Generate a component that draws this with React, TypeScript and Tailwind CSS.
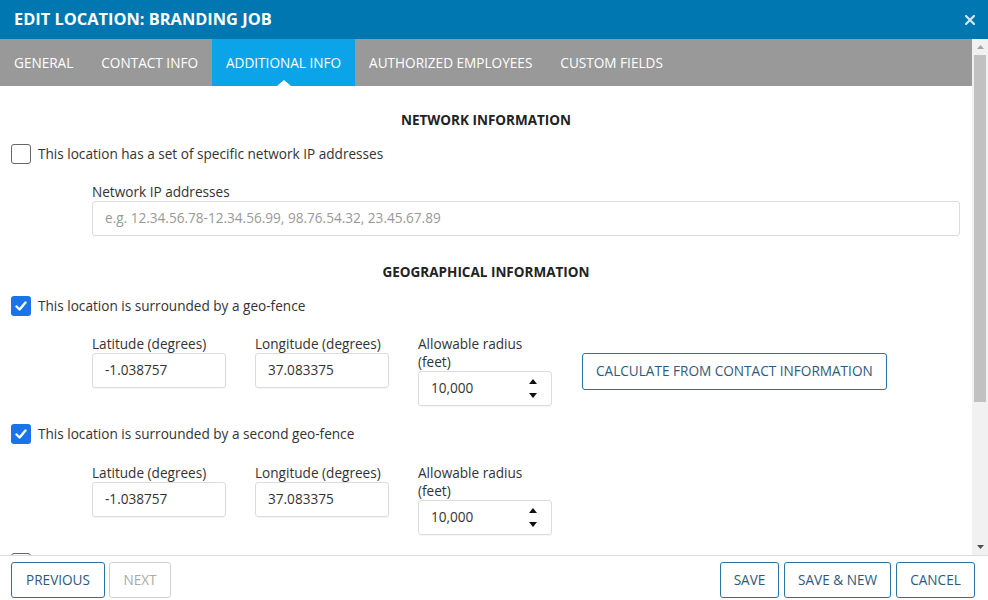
import React from "react";

const font = { fontFamily: '"Open Sans", "Noto Sans", Arial, sans-serif' };

function Checkbox({ checked }: { checked?: boolean }) {
  if (checked) {
    return (
      <div className="w-[20px] h-[20px] rounded-[3px] bg-[#1a73e8] flex items-center justify-center shrink-0">
        <svg width="14" height="14" viewBox="0 0 14 14">
          <path d="M2.5 7.5 L5.6 10.5 L11.5 3.5" stroke="white" strokeWidth="2.4" fill="none" strokeLinecap="round" strokeLinejoin="round" />
        </svg>
      </div>
    );
  }
  return <div className="w-[20px] h-[20px] rounded-[3px] border-[1.5px] border-[#666] bg-white shrink-0" />;
}

function Field({ label, value, spin }: { label: React.ReactNode; value: string; spin?: boolean }) {
  return (
    <div className="w-[134px] flex flex-col">
      <div className="text-[13.6px] leading-[18px] text-[#333]">{label}</div>
      <div className="h-[35px] border border-[#dcdcdc] rounded-[3px] shadow-[0_1px_1px_rgba(0,0,0,0.04)] flex items-center pl-[12px] pr-[14px] text-[13.6px] text-[#333] justify-between">
        <span>{value}</span>
        {spin && (
          <div className="flex flex-col gap-[9px] items-center">
            <svg width="8" height="5" viewBox="0 0 8 5"><path d="M0 5 L4 0 L8 5 Z" fill="#111" /></svg>
            <svg width="8" height="5" viewBox="0 0 8 5"><path d="M0 0 L8 0 L4 5 Z" fill="#111" /></svg>
          </div>
        )}
      </div>
    </div>
  );
}

function GeoRow({ withButton }: { withButton?: boolean }) {
  return (
    <div className="flex items-start pl-[92px] gap-[29px]">
      <Field label="Latitude (degrees)" value="-1.038757" />
      <Field label="Longitude (degrees)" value="37.083375" />
      <Field label={<>Allowable radius<br />(feet)</>} value="10,000" spin />
      {withButton && (
        <button className="ml-[1px] mt-[18px] h-[37px] px-[13px] border border-[#2a72a3] rounded-[3px] text-[13.6px] text-[#2d5a7a] bg-white">
          CALCULATE FROM CONTACT INFORMATION
        </button>
      )}
    </div>
  );
}

function CheckRow({ checked, label }: { checked?: boolean; label: string }) {
  return (
    <div className="flex items-center gap-[7px] pl-[11px] h-[20px]">
      <Checkbox checked={checked} />
      <span className="text-[13.6px] text-[#333] leading-[20px]">{label}</span>
    </div>
  );
}

function FooterBtn({ children, disabled, w }: { children: React.ReactNode; disabled?: boolean; w: string }) {
  return (
    <button
      className={
        "h-[36px] pt-[1px] rounded-[3px] border text-[13.6px] bg-white flex items-center justify-center " +
        w + " " +
        (disabled ? "border-[#cfcfcf] text-[#aaa]" : "border-[#2a72a3] text-[#2d5a7a]")
      }
    >
      {children}
    </button>
  );
}

export default function App() {
  const tabs = ["GENERAL", "CONTACT INFO", "ADDITIONAL INFO", "AUTHORIZED EMPLOYEES", "CUSTOM FIELDS"];
  return (
    <div style={font} className="w-[988px] h-[600px] flex flex-col bg-white overflow-hidden">
      <div className="h-[39px] bg-[#0077b0] flex items-center justify-between pl-[14px] pr-[13px] shrink-0">
        <span className="text-white font-bold text-[16.4px]">EDIT LOCATION: BRANDING JOB</span>
        <svg width="10" height="10" viewBox="0 0 10 10">
          <path d="M1 1 L9 9 M9 1 L1 9" stroke="#d6e6f0" strokeWidth="2.2" strokeLinecap="square" />
        </svg>
      </div>
      <div className="flex flex-1 min-h-0">
        <div className="flex-1 flex flex-col min-w-0 overflow-hidden">
          <div className="h-[47px] bg-[#999999] flex shrink-0">
            {tabs.map((t) => {
              const active = t === "ADDITIONAL INFO";
              return (
                <div
                  key={t}
                  className={
                    "relative h-full flex items-center pt-[2px] px-[14px] text-[13.6px] text-white " +
                    (active ? "bg-[#0ba4e8]" : "")
                  }
                >
                  {t}
                  {active && (
                    <div className="absolute bottom-0 left-1/2 -translate-x-1/2 w-0 h-0 border-l-[7px] border-r-[7px] border-b-[6px] border-l-transparent border-r-transparent border-b-white" />
                  )}
                </div>
              );
            })}
          </div>
          <div className="flex-1 flex flex-col">
            <div className="mt-[24px] h-[20px] text-center font-bold text-[13.5px] text-[#222] leading-[20px]">NETWORK INFORMATION</div>
            <div className="mt-[14px]"><CheckRow label="This location has a set of specific network IP addresses" /></div>
            <div className="mt-[19px] pl-[92px] pr-[12px]">
              <div className="text-[13.6px] leading-[18px] text-[#333]">Network IP addresses</div>
              <div className="h-[35px] border border-[#dcdcdc] rounded-[3px] flex items-center pl-[12px] text-[13.6px] text-[#999]">
                e.g. 12.34.56.78-12.34.56.99, 98.76.54.32, 23.45.67.89
              </div>
            </div>
            <div className="mt-[26px] h-[20px] text-center font-bold text-[13.5px] text-[#222] leading-[20px]">GEOGRAPHICAL INFORMATION</div>
            <div className="mt-[14px]"><CheckRow checked label="This location is surrounded by a geo-fence" /></div>
            <div className="mt-[19px]"><GeoRow withButton /></div>
            <div className="mt-[18px]"><CheckRow checked label="This location is surrounded by a second geo-fence" /></div>
            <div className="mt-[20px]"><GeoRow /></div>
            <div className="mt-[18px]"><CheckRow label="" /></div>
          </div>
        </div>
        <div className="w-[16px] bg-[#f1f1f1] flex flex-col items-center shrink-0">
          <div className="h-[16px] flex items-center justify-center">
            <svg width="7" height="4" viewBox="0 0 7 4"><path d="M0 4 L3.5 0 L7 4 Z" fill="#a3a3a3" /></svg>
          </div>
          <div className="w-[12px] h-[347px] bg-[#c1c1c1]" />
          <div className="flex-1" />
          <div className="h-[16px] flex items-center justify-center">
            <svg width="7" height="4" viewBox="0 0 7 4"><path d="M0 0 L7 0 L3.5 4 Z" fill="#505050" /></svg>
          </div>
        </div>
      </div>
      <div className="h-[45px] border-t border-[#dddddd] flex items-start pt-[6px] pl-[11px] pr-[13px] shrink-0 bg-white">
        <div className="flex gap-[4px]">
          <FooterBtn w="w-[94px]">PREVIOUS</FooterBtn>
          <FooterBtn w="w-[62px]" disabled>NEXT</FooterBtn>
        </div>
        <div className="flex-1" />
        <div className="flex gap-[5px]">
          <FooterBtn w="w-[59px]">SAVE</FooterBtn>
          <FooterBtn w="w-[107px]">SAVE &amp; NEW</FooterBtn>
          <FooterBtn w="w-[79px]">CANCEL</FooterBtn>
        </div>
      </div>
    </div>
  );
}
